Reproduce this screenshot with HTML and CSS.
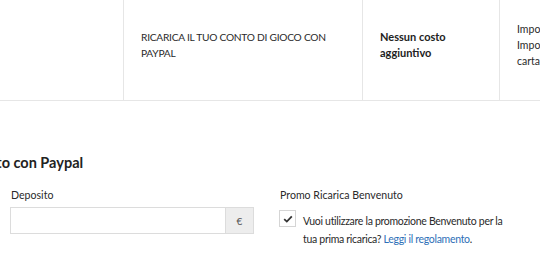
FILE: index.html
```html
<!DOCTYPE html>
<html lang="it">
<head>
<meta charset="utf-8">
<link rel="stylesheet" href="styles.css">
</head>
<body>
<div class="page">
  <div class="methods">
    <div class="cell cell-logo"></div>
    <div class="cell cell-desc">RICARICA IL TUO CONTO DI GIOCO CON PAYPAL</div>
    <div class="cell cell-cost"><strong>Nessun costo aggiuntivo</strong></div>
    <div class="cell cell-limits">Importo minimo 10€<br>Importo massimo<br>carta</div>
  </div>
  <h2 class="title">Ricarica il conto con Paypal</h2>
  <div class="form">
    <div class="col col-left">
      <label class="label">Deposito</label>
      <div class="input-group">
        <input class="input" type="text">
        <span class="addon">€</span>
      </div>
    </div>
    <div class="col col-right">
      <div class="label">Promo Ricarica Benvenuto</div>
      <div class="check-row">
        <span class="checkbox"><svg width="10" height="8" viewBox="0 0 10 8"><path d="M1.2 4.2 L3.8 6.6 L8.8 1.4" fill="none" stroke="#333" stroke-width="1.8"/></svg></span>
        <p class="check-text">Vuoi utilizzare la promozione Benvenuto per la tua prima ricarica? <a href="#" class="link">Leggi il regolamento</a>.</p>
      </div>
    </div>
  </div>
</div>
</body>
</html>
```

FILE: styles.css
```css
html, body {
  margin: 0;
  padding: 0;
  background: #fff;
  overflow: hidden;
}
body {
  font-family: Lato, "Open Sans", sans-serif;
  font-size: 10.5px;
  color: #2a2a2a;
  width: 540px;
  height: 272px;
}
.page {
  width: 540px;
}
.methods {
  display: flex;
  height: 100px;
  border-bottom: 1px solid #e6e6e6;
  white-space: nowrap;
  overflow: hidden;
}
.cell {
  display: flex;
  align-items: center;
  padding-left: 17px;
  padding-bottom: 11px;
  line-height: 16px;
  white-space: normal;
  flex-shrink: 0;
  box-sizing: border-box;
}
.cell-logo {
  width: 124px;
  border-right: 1px solid #e6e6e6;
}
.cell-desc {
  width: 239px;
  border-right: 1px solid #e6e6e6;
  padding-right: 6px;
  font-size: 10.2px;
  letter-spacing: -0.25px;
}
.cell-cost {
  width: 137px;
  border-right: 1px solid #e6e6e6;
  padding-right: 30px;
  font-size: 11px;
}
.cell-cost strong {
  font-weight: 700;
  color: #222;
}
.cell-limits {
  width: 160px;
  white-space: nowrap;
}
.title {
  margin: 52px 0 0 -92px;
  font-size: 14.5px;
  font-weight: 700;
  color: #222;
  line-height: 20px;
}
.form {
  display: flex;
  margin-top: 14px;
}
.col-left {
  width: 244px;
  margin-left: 10px;
}
.col-right {
  margin-left: 25px;
  width: 236px;
}
.label {
  display: block;
  font-size: 10.6px;
  line-height: 16px;
  margin-left: 1px;
  margin-bottom: 4px;
}
.input-group {
  display: flex;
  height: 27px;
  border: 1px solid #dcdcdc;
  box-sizing: border-box;
}
.input {
  flex: 1;
  border: 0;
  margin: 0;
  padding: 0 8px;
  min-width: 0;
  background: #fff;
}
.addon {
  width: 27px;
  background: #ededed;
  border-left: 1px solid #dcdcdc;
  display: flex;
  align-items: center;
  justify-content: center;
  font-size: 10px;
  color: #555;
}
.check-row {
  display: flex;
  align-items: flex-start;
  margin-top: 7px;
}
.checkbox {
  flex-shrink: 0;
  width: 17px;
  height: 17px;
  border: 1px solid #d5d5d5;
  box-sizing: border-box;
  display: flex;
  align-items: center;
  justify-content: center;
  margin-right: 7px;
}
.check-text {
  margin: 3px 0 0;
  font-size: 10.5px;
  letter-spacing: -0.3px;
  line-height: 17.5px;
}
.link {
  color: #2e6fb7;
  text-decoration: none;
}
```
